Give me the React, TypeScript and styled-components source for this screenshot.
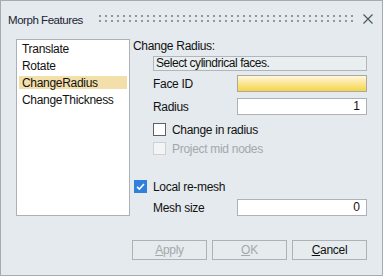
import React from 'react';
import styled, { createGlobalStyle } from 'styled-components';

const GlobalStyle = createGlobalStyle`
  html, body {
    margin: 0;
    padding: 0;
    background: #ffffff;
  }
  body {
    font-family: "Liberation Sans", Arial, sans-serif;
    font-size: 11px;
  }
`;

const features = ['Translate', 'Rotate', 'ChangeRadius', 'ChangeThickness'];

const Mnemonic: React.FC<{ text: string }> = ({ text }) => (
  <>
    <u>{text[0]}</u>
    {text.slice(1)}
  </>
);

const CloseIcon = () => (
  <svg width="10" height="10" viewBox="0 0 10 10">
    <path d="M0.5 0.5 L9.5 9.5 M9.5 0.5 L0.5 9.5" stroke="#4b5259" strokeWidth="1.1" fill="none" />
  </svg>
);

const CheckMark = () => (
  <svg width="11" height="11" viewBox="0 0 11 11">
    <path d="M2 5.8 L4.4 8 L9 3" stroke="#ffffff" strokeWidth="1.6" fill="none" />
  </svg>
);

type CheckState = 'off' | 'on' | 'disabled';

const Check: React.FC<{ state: CheckState }> = ({ state }) => (
  <S.CheckBox $state={state}>{state === 'on' && <CheckMark />}</S.CheckBox>
);

const App: React.FC = () => {
  const selected = 'ChangeRadius';

  return (
    <>
      <GlobalStyle />
      <S.Window>
        <S.TitleBar>
          <S.Title>Morph Features</S.Title>
          <S.Grip>
            <S.GripRow />
            <S.GripRow />
          </S.Grip>
          <S.Close>
            <CloseIcon />
          </S.Close>
        </S.TitleBar>

        <S.Body>
          <S.List>
            {features.map(f => (
              <S.ListItem key={f} $active={f === selected}>{f}</S.ListItem>
            ))}
          </S.List>

          <S.Panel>
            <S.Heading>Change Radius:</S.Heading>
            <S.Info>Select cylindrical faces.</S.Info>

            <S.FieldRow $mt={4}>
              <S.Label>Face ID</S.Label>
              <S.Input $picker />
            </S.FieldRow>
            <S.FieldRow $mt={6}>
              <S.Label>Radius</S.Label>
              <S.Input>1</S.Input>
            </S.FieldRow>

            <S.CheckRow $mt={6} $indent={20}>
              <Check state="off" />
              <span>Change in radius</span>
            </S.CheckRow>
            <S.CheckRow $mt={2} $indent={20} $disabled>
              <Check state="disabled" />
              <span>Project mid nodes</span>
            </S.CheckRow>

            <S.CheckRow $mt={21} $indent={1}>
              <Check state="on" />
              <span>Local re-mesh</span>
            </S.CheckRow>
            <S.FieldRow $mt={4}>
              <S.Label>Mesh size</S.Label>
              <S.Input>0</S.Input>
            </S.FieldRow>
          </S.Panel>
        </S.Body>

        <S.Footer>
          <S.Button disabled><Mnemonic text="Apply" /></S.Button>
          <S.Button disabled><Mnemonic text="OK" /></S.Button>
          <S.Button><Mnemonic text="Cancel" /></S.Button>
        </S.Footer>
      </S.Window>
    </>
  );
};

const S = {
  Window: styled.div`
    width: 383px;
    height: 276px;
    box-sizing: border-box;
    border: 1px solid #a6abb0;
    background: #e4eaee;
    display: flex;
    flex-direction: column;
    color: #111111;
  `,
  TitleBar: styled.div`
    height: 29px;
    display: flex;
    align-items: flex-start;
    padding: 12px 9px 0 7px;
    box-sizing: border-box;
  `,
  Title: styled.div`
    font-size: 11.5px;
    line-height: 14px;
    color: #1c2433;
    letter-spacing: -0.45px;
  `,
  Grip: styled.div`
    flex: 1;
    margin: 2px 7px 0 16px;
    display: flex;
    flex-direction: column;
    gap: 3px;
  `,
  GripRow: styled.div`
    height: 2px;
    background-image: linear-gradient(to right, #8f959b 2px, transparent 2px);
    background-size: 6px 2px;
  `,
  Close: styled.div`
    width: 10px;
    height: 10px;
    margin-top: 1px;
    display: flex;
  `,
  Body: styled.div`
    display: flex;
    padding: 9px 15px 0 15px;
  `,
  List: styled.div`
    width: 114px;
    height: 177px;
    box-sizing: border-box;
    border: 1px solid #adb1b5;
    background: #ffffff;
    padding: 2px 2px 0;
    display: flex;
    flex-direction: column;
    gap: 4px;
  `,
  ListItem: styled.div<{ $active?: boolean }>`
    height: 13px;
    line-height: 14px;
    padding-left: 3px;
    font-size: 12px;
    letter-spacing: -0.3px;
    background: ${({ $active }) => ($active ? '#f2dfaa' : 'transparent')};
  `,
  Panel: styled.div`
    flex: 1;
    margin-left: 3px;
    display: flex;
    flex-direction: column;
  `,
  Heading: styled.div`
    height: 14px;
    line-height: 14px;
    font-size: 12px;
    letter-spacing: -0.3px;
  `,
  Info: styled.div`
    margin: 3px 0 0 20px;
    height: 15px;
    box-sizing: border-box;
    border: 1px solid #b2b6ba;
    background: #e9eef1;
    padding-left: 2px;
    line-height: 13px;
    font-size: 12px;
    letter-spacing: -0.45px;
  `,
  FieldRow: styled.div<{ $mt: number }>`
    margin-top: ${({ $mt }) => $mt}px;
    padding-left: 20px;
    height: 17px;
    display: flex;
    align-items: center;
  `,
  Label: styled.div`
    width: 84px;
    flex-shrink: 0;
    font-size: 12px;
    letter-spacing: -0.3px;
  `,
  Input: styled.div<{ $picker?: boolean }>`
    flex: 1;
    height: 17px;
    box-sizing: border-box;
    border: 1px solid ${({ $picker }) => ($picker ? '#a9a9a2' : '#aeb2b6')};
    background: ${({ $picker }) =>
      $picker ? 'linear-gradient(#fff8dc 0%, #fce79a 45%, #f5d548 100%)' : '#ffffff'};
    text-align: right;
    padding-right: 6px;
    line-height: 15px;
    font-size: 12px;
  `,
  CheckRow: styled.div<{ $mt: number; $indent: number; $disabled?: boolean }>`
    margin-top: ${({ $mt }) => $mt}px;
    padding-left: ${({ $indent }) => $indent}px;
    height: 17px;
    display: flex;
    align-items: center;
    gap: 6px;
    font-size: 12px;
    letter-spacing: -0.3px;
    color: ${({ $disabled }) => ($disabled ? '#a3a8ad' : 'inherit')};
  `,
  CheckBox: styled.div<{ $state: CheckState }>`
    width: 13px;
    height: 13px;
    box-sizing: border-box;
    display: flex;
    align-items: center;
    justify-content: center;
    border: 1px solid
      ${({ $state }) => ($state === 'on' ? '#2f80dc' : $state === 'disabled' ? '#cdd1d4' : '#5e6266')};
    background: ${({ $state }) =>
      $state === 'on' ? '#2f80dc' : $state === 'disabled' ? '#f2f4f5' : '#ffffff'};
  `,
  Footer: styled.div`
    display: flex;
    justify-content: flex-end;
    gap: 5px;
    padding: 24px 15px 0 0;
  `,
  Button: styled.button`
    width: 75px;
    height: 20px;
    box-sizing: border-box;
    margin: 0;
    padding: 0;
    border: 1px solid #adb2b6;
    background: #e6ebee;
    font-family: "Liberation Sans", Arial, sans-serif;
    font-size: 12px;
    letter-spacing: -0.3px;
    color: #111111;

    &:disabled {
      color: #a3a8ad;
    }
  `,
};

export default App;
